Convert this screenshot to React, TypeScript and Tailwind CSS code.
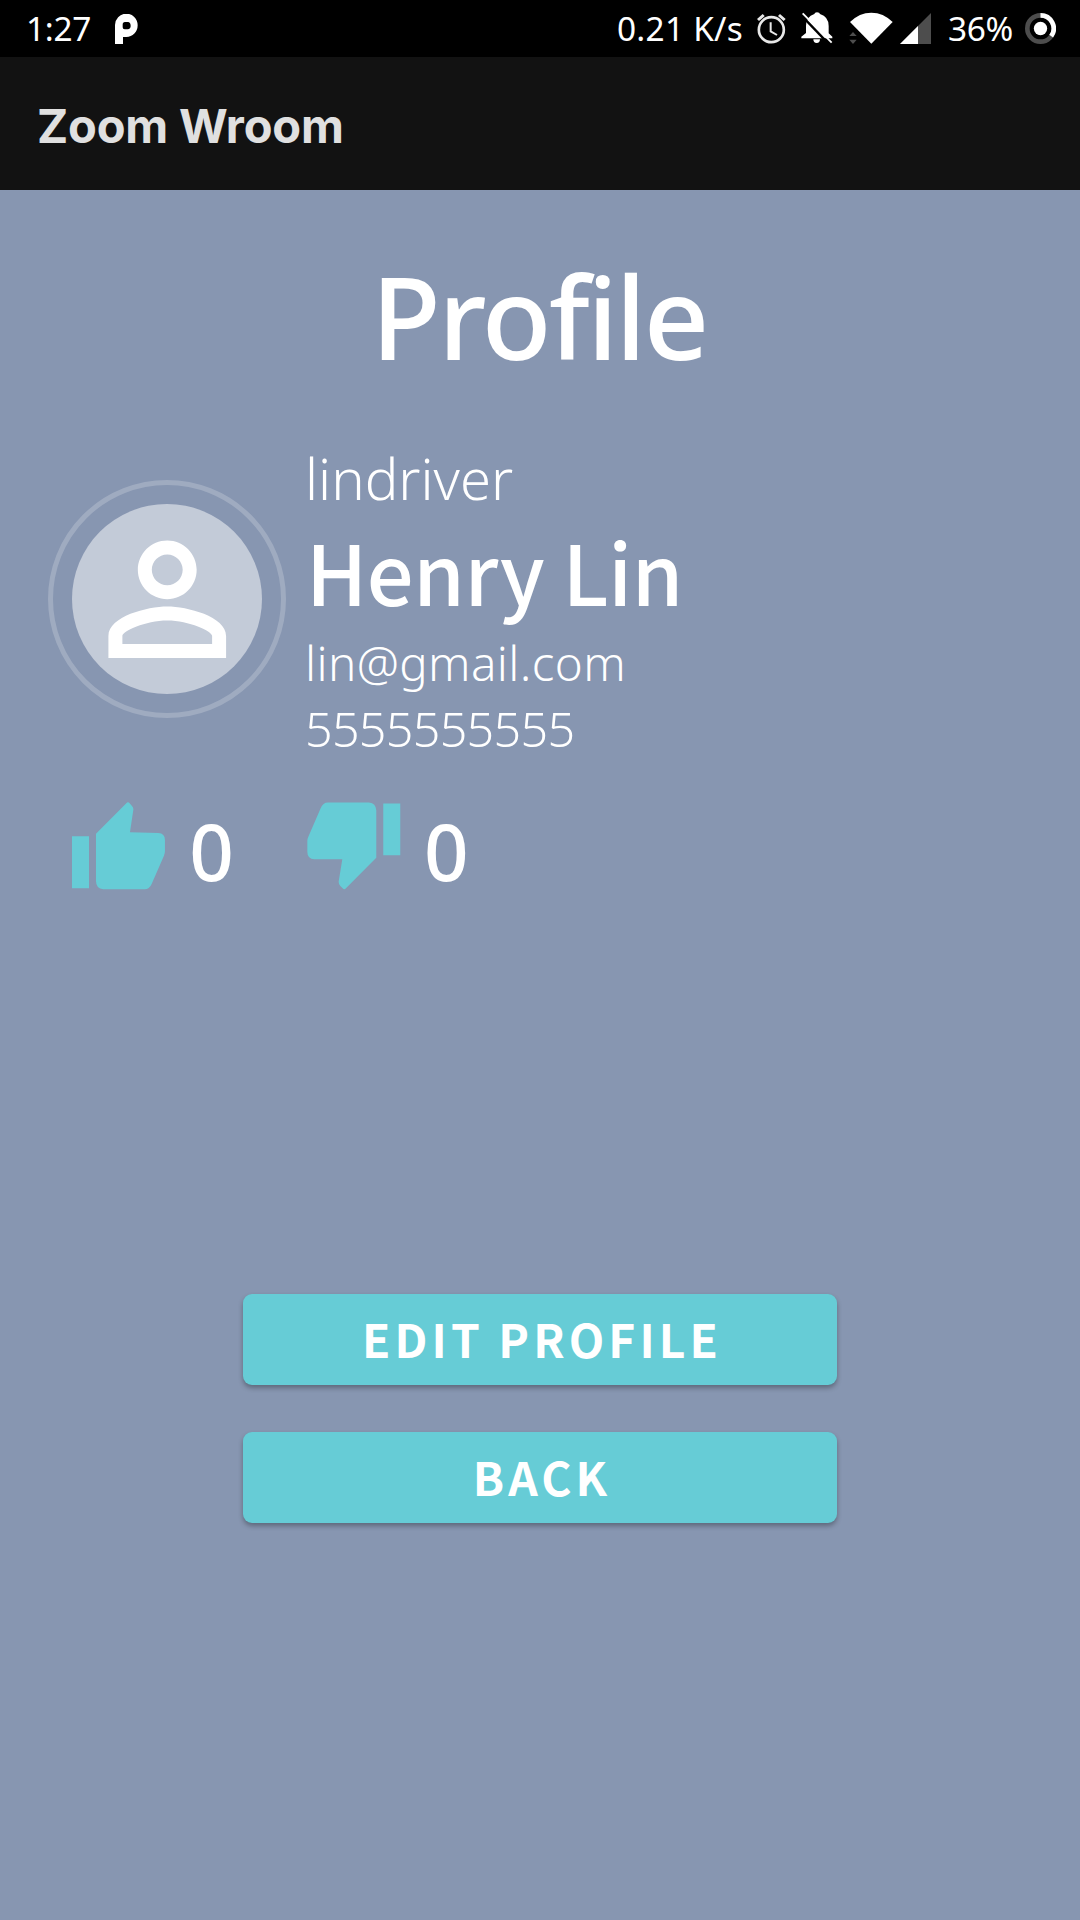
import React from 'react';

function StatusBar() {
  return (
    <div className="flex h-[57px] items-start bg-black text-[33.4px] leading-[56px] font-[400] whitespace-nowrap">
      <span className="ml-[26px] w-[89px] tracking-[-0.3px]">1:27</span>
      <svg className="mt-[14px] h-[30px] w-[23px]" viewBox="346 42 69 90" fill="#fff">
        <path fillRule="evenodd" d="M346 132V77a34 35 0 1 1 34 34H370V132zM376 66h10q7 2 7 12q0 9-9 10h-9q-6 0-6-6v-8q0-8 7-8z" />
      </svg>
      <div className="ml-auto flex items-start">
        <span className="w-[140px] tracking-[0.25px]">0.21 K/s</span>
        <svg className="mt-[12.7px] h-[31px] w-[29px]" viewBox="470 38 87 93" fill="none" stroke="#e8e8e8">
          <circle cx="513" cy="88" r="37.5" strokeWidth="8" />
          <path d="M511 66v27l19 11" strokeWidth="6" />
          <path d="M473 59l17-15M536 44l17 15" strokeWidth="9" />
        </svg>
        <svg className="mt-[12px] ml-[15px] h-[32px] w-[32px]" viewBox="603 36 96 96">
          <path fill="#fff" d="M651 37q8 0 9 5q26 8 26 36v22l11 10v5H604v-5l14-11V78q0-28 25-36q1-5 8-5zM640 118h20q0 11-10 11t-10-11z" />
          <path stroke="#000" strokeWidth="7" d="M604 46l84 88" />
          <path stroke="#fff" strokeWidth="5.5" d="M608 40l87 88" />
        </svg>
        <svg className="mt-[12px] ml-[16px] h-[32px] w-[44px]" viewBox="27 36 132 96" fill="#fff">
          <path d="M94 131L30 66Q58 38 94 38T158 66Z" />
          <path fill="#4d4d4d" d="M39 96l11 12H28zM28 119h22l-11 13z" />
        </svg>
        <svg className="mt-[13px] ml-[7px] h-[31px] w-[31px]" viewBox="180 39 93 93">
          <path fill="#4d4d4d" d="M180 132L273 39V132z" />
          <path fill="#fff" d="M180 132L234 78V132z" />
        </svg>
        <span className="ml-[17px] w-[77px] tracking-[-0.4px]">36%</span>
        <svg className="mt-[13px] mr-[24px] h-[31px] w-[31px]" viewBox="0 0 93 93" fill="none">
          <circle cx="46.5" cy="46.5" r="39.5" stroke="#4d4d4d" strokeWidth="14" />
          <path d="M46.5 7A39.5 39.5 0 0 1 78.5 69.7" stroke="#fff" strokeWidth="14" />
          <circle cx="46.5" cy="46.5" r="20" fill="#fff" />
        </svg>
      </div>
    </div>
  );
}

function Avatar() {
  return (
    <div className="mt-[45.5px] flex size-[238px] shrink-0 items-center justify-center rounded-full border-[5px] border-white/20">
      <div className="flex size-[190px] shrink-0 items-center justify-center rounded-full bg-white/50">
        <svg className="size-[176.5px]" viewBox="0 0 24 24" fill="#fff">
          <path d="M12 5.9c1.16 0 2.1.94 2.1 2.1s-.94 2.1-2.1 2.1S9.9 9.16 9.9 8s.94-2.1 2.1-2.1m0 9c2.97 0 6.1 1.46 6.1 2.1v1.1H5.9V17c0-.64 3.13-2.1 6.1-2.1M12 4C9.79 4 8 5.79 8 8s1.79 4 4 4 4-1.79 4-4-1.79-4-4-4zm0 9c-2.67 0-8 1.34-8 4v3h16v-3c0-2.66-5.33-4-8-4z" />
        </svg>
      </div>
    </div>
  );
}

function Button({ label }: { label: string }) {
  return (
    <button className="flex h-[91px] w-[594px] items-center justify-center rounded-[9px] bg-[#66ccd6] pb-[2px] pl-[4px] font-['Noto_Sans_CJK_SC',sans-serif] text-[46.1px] font-bold tracking-[4.1px] shadow-[0_3px_5px_rgba(0,0,0,0.3)]">
      {label}
    </button>
  );
}

export default function App() {
  return (
    <div className="flex h-[1920px] w-[1080px] flex-col bg-[#8796b1] font-['Noto_Sans',sans-serif] text-white">
      <StatusBar />
      <header className="h-[133px] bg-[#121212] pt-[2px] pl-[37px] font-['Inter',sans-serif] text-[47px] leading-[134px] font-bold tracking-[-0.2px] text-[#e0e0e0]">
        Zoom Wroom
      </header>
      <main className="flex flex-1 flex-col">
        <h1 className="mt-[47px] pr-[2px] text-center text-[114.1px] leading-[158px] font-medium tracking-[-2.5px]">Profile</h1>
        <section className="mt-[39.5px] ml-[48px] flex gap-[19px]">
          <Avatar />
          <div className="whitespace-nowrap">
            <p className="pt-[2px] text-[56.2px] leading-[83.4px] font-[330]">lindriver</p>
            <p className="pl-[1px] font-['Noto_Sans_CJK_SC',sans-serif] text-[82.7px] leading-[101.2px] font-medium tracking-[-0.4px]">Henry Lin</p>
            <p className="pt-[1px] text-[47.5px] leading-[82px] font-[330] tracking-[0.4px]">lin@gmail.com</p>
            <p className="pt-[3px] text-[48.4px] leading-[43.8px] font-[320] tracking-[-0.7px]">5555555555</p>
          </div>
        </section>
        <section className="mt-[51px] ml-[72px] flex h-[88px] items-center text-[78px] leading-[88px] font-medium">
          <svg className="h-[87.7px] w-[93.3px]" viewBox="66 65 280 263" fill="#66ccd6">
            <path d="M66 168h51v156h-51zM138 160L229 69Q234 63 239 69L246 77Q251 82 250 89L240 156L325 158Q345 159 345 179L345 212Q345 219 342 226L305 311Q298 327 284 327L160 327Q138 325 138 302Z" />
          </svg>
          <span className="ml-[24px] w-[118px] pt-[10px]">0</span>
          <svg className="h-[87.7px] w-[93.6px]" viewBox="770 65 281 263" fill="#66ccd6">
            <path d="M999 69h51v156h-51zM978 232L887 324Q882 330 877 324L870 317Q865 311 865 304L876 237L792 237Q771 235 771 214L771 182Q771 175 774 169L811 84Q818 66 833 66L956 66Q977 68 978 90Z" />
          </svg>
          <span className="ml-[23px] pt-[10px]">0</span>
        </section>
        <section className="mt-[404.5px] flex flex-col items-center gap-[47px]">
          <Button label="EDIT PROFILE" />
          <Button label="BACK" />
        </section>
      </main>
    </div>
  );
}
